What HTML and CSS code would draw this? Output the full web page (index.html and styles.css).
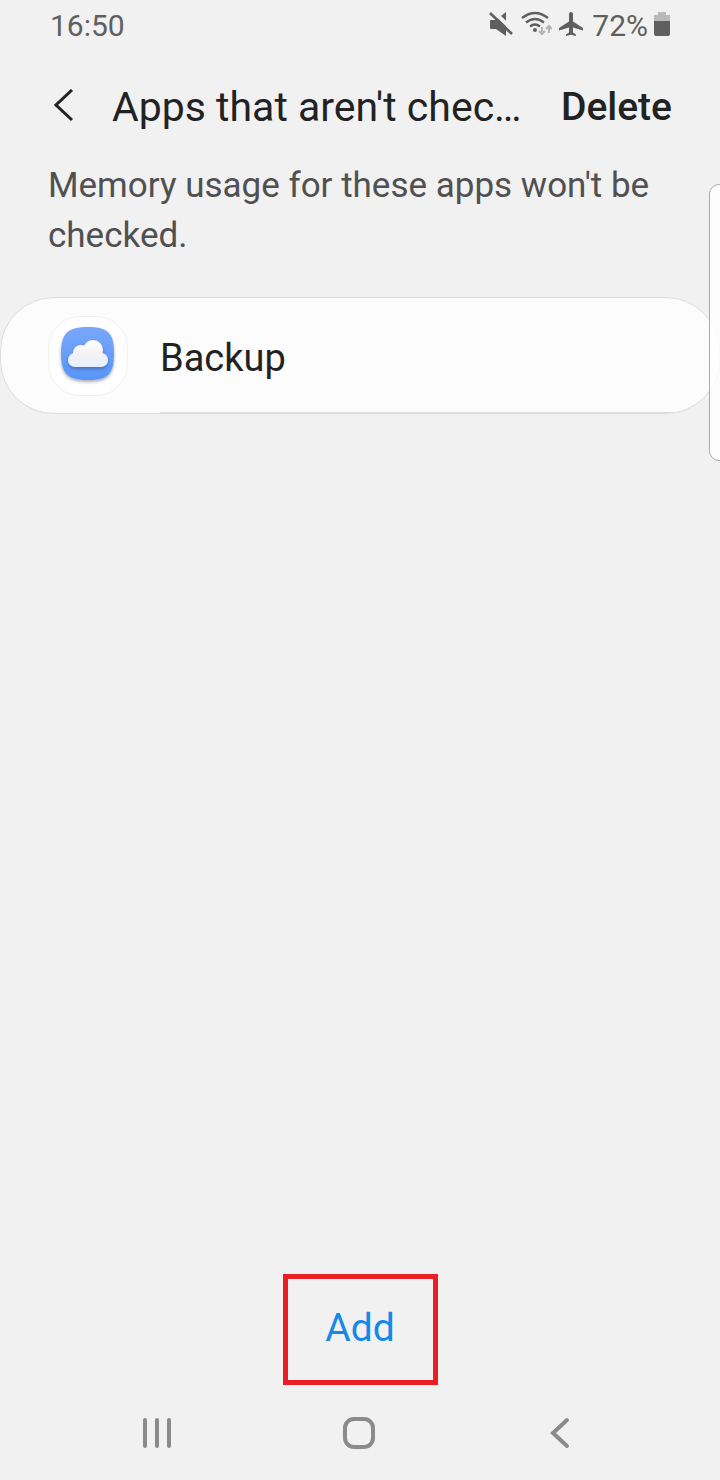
FILE: index.html
```
<!DOCTYPE html>
<html lang="en">
<head>
  <meta charset="UTF-8" />
  <meta name="viewport" content="width=device-width, initial-scale=1.0"/>
  <title>Apps that aren't checked</title>
  <link rel="stylesheet" href="styles.css">
</head>
<body>

  <!-- Status bar -->
  <div class="status-bar">
    <span>16:50</span>
    <div class="status-icons">
      <svg width="26" height="28" viewBox="0 0 26 28" aria-hidden="true">
        <path fill="#5f5f5f" d="M3 9h5l10-8v24l-10-7H3q-1 0-1-1v-7q0-1 1-1z"/>
        <path stroke="#f1f1f1" stroke-width="4" d="M4-1l23 22"/>
        <path stroke="#5f5f5f" stroke-width="2.6" d="M2 2l22 21"/>
      </svg>
      <svg width="32" height="28" viewBox="0 0 32 28" aria-hidden="true">
        <g fill="none" stroke="#5f5f5f" stroke-width="2.4">
          <path d="M2 7q13-10 26 0"/>
          <path d="M6 11.500q9-7 18 0"/>
          <path d="M10 15.500q5-4 10 0"/>
        </g>
        <circle cx="15" cy="19" r="2" fill="#5f5f5f"/>
        <path fill="none" stroke="#b4b4b4" stroke-width="2" d="M22 16v7M19 20l3 3 3-3M29 22v-7M26 18l3-3 3 3"/>
      </svg>
      <svg width="26" height="28" viewBox="0 0 26 28" aria-hidden="true">
        <path fill="#5f5f5f" d="M13 1c1.300 0 2 1 2 2.500v7l10 6.500v2.500L15 16.500v5l3 2V25l-5-1.300L8 25v-1.500l3-2v-5L1 19.500V17l10-6.500v-7C11 2 11.700 1 13 1z"/>
      </svg>
      <span class="percent">72%</span>
      <svg width="16" height="28" viewBox="0 0 16 28" aria-hidden="true">
        <path fill="#b9b9b9" d="M4 1h8v3h4v7H0V4h4z"/>
        <path fill="#5f5f5f" d="M0 10h16v13q0 2-2 2H2q-2 0-2-2z"/>
      </svg>
    </div>
  </div>

  <header class="header">
    <button class="back-btn" aria-label="Back">
      <svg width="22" height="34" viewBox="0 0 22 34" aria-hidden="true">
        <path fill="none" stroke="#222" stroke-width="3" d="M20 1L4 16l16 15"/>
      </svg>
    </button>
    <h1>Apps that aren't chec…</h1>
    <button class="delete-btn">Delete</button>
  </header>

  <main>
    <p class="description">Memory usage for these apps won't be checked.</p>
    <ul class="app-list">
      <li class="app-row">
        <span class="app-icon">
          <svg width="78" height="78" viewBox="0 0 78 78" aria-hidden="true">
            <defs>
              <linearGradient id="sky" x1="0" y1="0" x2="0" y2="1">
                <stop offset="0" stop-color="#78a7fa"/>
                <stop offset="1" stop-color="#5896f8"/>
              </linearGradient>
              <linearGradient id="cloud" gradientUnits="userSpaceOnUse" x1="0" y1="23" x2="0" y2="50">
                <stop offset="0" stop-color="#fff"/>
                <stop offset="0.500" stop-color="#f4f4f4"/>
                <stop offset="1" stop-color="#e6eeff"/>
              </linearGradient>
              <filter id="shadow" x="-20%" y="-20%" width="140%" height="150%">
                <feDropShadow dx="0" dy="2" stdDeviation="1.500" flood-color="#335" flood-opacity="0.400"/>
              </filter>
            </defs>
            <path fill="url(#sky)" filter="url(#shadow)" d="M39 10c20 0 26 6 26 26.500S59 63 39 63 12 57 12 36.500 19 10 39 10z"/>
            <g fill="url(#cloud)" filter="url(#shadow)">
              <circle cx="44" cy="33" r="10"/>
              <circle cx="32" cy="36" r="8"/>
              <circle cx="26" cy="43" r="7"/>
              <circle cx="52" cy="43" r="7"/>
              <rect x="26" y="36" width="26" height="14"/>
            </g>
          </svg>
        </span>
        <span class="app-name">Backup</span>
      </li>
    </ul>
  </main>

  <footer class="actions">
    <button class="add-btn">Add</button>
  </footer>

  <!-- System navigation -->
  <nav class="nav-bar">
    <button aria-label="Recent apps">
      <svg width="34" height="34" viewBox="0 0 34 34" aria-hidden="true">
        <path stroke="#8b8b8b" stroke-width="4" stroke-linecap="round" d="M5 4v26M17 4v26M29 4v26"/>
      </svg>
    </button>
    <button aria-label="Home">
      <svg width="34" height="34" viewBox="0 0 34 34" aria-hidden="true">
        <rect x="3" y="3" width="28" height="28" rx="9" fill="none" stroke="#8b8b8b" stroke-width="4"/>
      </svg>
    </button>
    <button aria-label="Back">
      <svg width="34" height="34" viewBox="0 0 34 34" aria-hidden="true">
        <path fill="none" stroke="#8b8b8b" stroke-width="4" stroke-linecap="round" d="M24 4L10 17l14 13"/>
      </svg>
    </button>
  </nav>

  <!-- Edge panel handle -->
  <div class="edge-handle"></div>

</body>
</html>
```
FILE: styles.css
```
* { box-sizing:border-box; }
body {
  margin:0; min-height:100vh;
  font-family:Roboto,sans-serif; background:#f1f1f1; color:#222;
  display:flex; flex-direction:column;
  position:relative; overflow-x:hidden;
}
button {
  padding:0; border:none; background:none;
  font-family:inherit; color:inherit; cursor:pointer;
}
svg { display:block; }

.status-bar {
  height:50px; padding:0 50px;
  display:flex; justify-content:space-between; align-items:center;
  font-size:30px; color:#5f5f5f;
}
.status-icons { display:flex; align-items:center; gap:6px; }
.status-icons .percent { margin-left:2px; }

.header {
  height:111px; padding:0 48px 0 52px;
  display:flex; align-items:center;
}
.back-btn { flex:none; margin-right:38px; }
.header h1 {
  flex:1; min-width:0; margin:0; padding-top:2px;
  font-size:41px; font-weight:400; line-height:56px;
  white-space:nowrap;
}
.delete-btn {
  flex:none; margin-left:20px; padding-top:2px;
  font-size:39px; font-weight:500; line-height:56px;
}

main { flex:1; }
.description {
  margin:0; padding:0 48px;
  font-size:35px; line-height:50px; color:#505050;
}
.app-list { list-style:none; margin:36px 0 0; padding:0; }
.app-row {
  position:relative;
  height:117px; padding:0 47px;
  display:flex; align-items:center; gap:32px;
  background:#fcfcfc; border:1px solid #dcdcdc; border-radius:54px;
}
/* divider starts under the app name */
.app-row::after {
  content:""; position:absolute; left:159px; right:44px; bottom:0;
  height:1px; background:#dcdcdc;
}
.app-icon {
  width:80px; height:80px;
  background:#fff; border:1px solid #f0f0f0; border-radius:32px;
}
.app-name { padding-top:4px; font-size:38px; }

.actions { display:flex; justify-content:center; }
.add-btn {
  width:155px; height:111px; padding-bottom:4px;
  border:5px solid #e81f27;
  font-size:39px; color:#1589ea;
}

.nav-bar {
  height:95px; padding:0 143px 0 140px;
  display:flex; justify-content:space-between; align-items:center;
}

.edge-handle {
  position:absolute; top:184px; right:-9px;
  width:20px; height:277px;
  background:rgba(255,255,255,0.800);
  border:1px solid #aaa; border-radius:12px;
}
```
